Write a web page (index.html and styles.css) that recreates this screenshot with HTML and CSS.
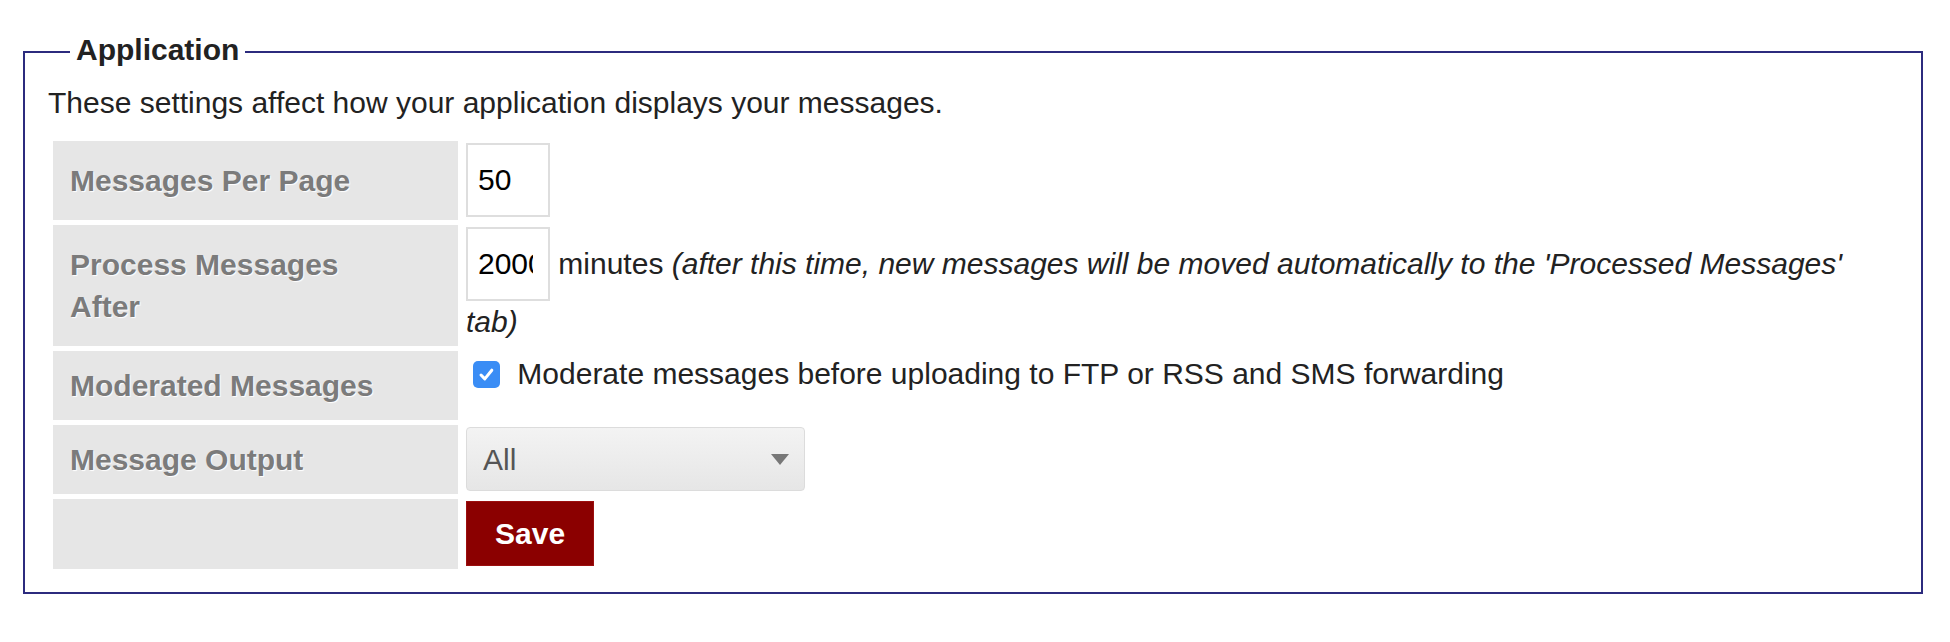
FILE: index.html
```html
<!DOCTYPE html>
<html lang="en">
<head>
<meta charset="utf-8">
<title>Application settings</title>
<link rel="stylesheet" href="styles.css">
</head>
<body>
<fieldset class="app-settings">
  <legend class="app-legend">Application</legend>
  <p class="intro">These settings affect how your application displays your messages.</p>
  <table class="settings">
    <tr>
      <th class="label">Messages Per Page</th>
      <td class="value"><input class="num" type="text" value="50"></td>
    </tr>
    <tr>
      <th class="label">Process Messages After</th>
      <td class="value"><input class="num" type="text" value="2000"> minutes <em>(after this time, new messages will be moved automatically to the 'Processed Messages' tab)</em></td>
    </tr>
    <tr>
      <th class="label">Moderated Messages</th>
      <td class="value"><label class="check"><svg class="box" viewBox="0 0 27 27" width="27" height="27" aria-hidden="true"><rect x="0" y="0" width="27" height="27" rx="5" ry="5" fill="#3a8df5"/><path d="M8 14 L11.8 17.9 L18.8 9.2" fill="none" stroke="#ffffff" stroke-width="3" stroke-linecap="round" stroke-linejoin="round"/></svg> Moderate messages before uploading to FTP or RSS and SMS forwarding</label></td>
    </tr>
    <tr>
      <th class="label">Message Output</th>
      <td class="value"><span class="select-wrap"><select class="select"><option>All</option></select><span class="caret"></span></span></td>
    </tr>
    <tr>
      <th class="label"></th>
      <td class="value"><button class="save" type="button">Save</button></td>
    </tr>
  </table>
</fieldset>
</body>
</html>
```

FILE: styles.css
```css
html, body {
  margin: 0;
  padding: 0;
  background: #ffffff;
}

body {
  font-family: "Liberation Sans", Arial, sans-serif;
  font-size: 30px;
  line-height: 42px;
  color: #222222;
}

.app-settings {
  margin: 29px 27px 0 23px;
  padding: 7px 23px 18px 23px;
  border: 2px solid #2c2b7e;
  min-width: 0;
}

.app-legend {
  margin-left: 22px;
  padding: 0 6px 4px 6px;
  font-weight: bold;
  color: #222222;
  line-height: 42px;
}

.intro {
  margin: 0 0 12px 0;
  color: #222222;
}

.settings {
  width: 100%;
  border-collapse: separate;
  border-spacing: 5px;
}

.label {
  box-sizing: border-box;
  width: 405px;
  padding: 13.5px 60px 13.5px 17px;
  background: #e6e6e6;
  color: #7b7b7b;
  font-weight: bold;
  text-align: left;
  vertical-align: middle;
  text-shadow: 1px 1px 1px #ffffff;
}

.value {
  padding: 2px 3px 3px 3px;
  vertical-align: top;
  color: #222222;
}

.num {
  box-sizing: border-box;
  width: 84px;
  height: 74px;
  padding: 0 15px 0 10px;
  border: 2px solid #dedede;
  background: #ffffff;
  font-family: "Liberation Sans", Arial, sans-serif;
  font-size: 30px;
  color: #000000;
  outline: none;
}

.value em {
  font-style: italic;
}

.check {
  display: inline;
}

.box {
  margin: 0 9px 0 7px;
  vertical-align: -4px;
}

.select-wrap {
  position: relative;
  display: inline-block;
}

.select {
  -webkit-appearance: none;
  appearance: none;
  box-sizing: border-box;
  width: 339px;
  height: 64px;
  padding: 0 16px;
  border: 1px solid #dcdcdc;
  border-radius: 4px;
  background: linear-gradient(#f3f3f3, #e6e6e6);
  font-family: "Liberation Sans", Arial, sans-serif;
  font-size: 30px;
  color: #555555;
  vertical-align: top;
}

.caret {
  position: absolute;
  right: 16px;
  top: 27px;
  width: 0;
  height: 0;
  border-left: 9px solid transparent;
  border-right: 9px solid transparent;
  border-top: 11px solid #777777;
  pointer-events: none;
}

.save {
  box-sizing: border-box;
  height: 65px;
  padding: 0 28px;
  border: 1px solid #9c0f0f;
  background: #8b0000;
  color: #ffffff;
  font-family: "Liberation Sans", Arial, sans-serif;
  font-size: 30px;
  font-weight: bold;
  vertical-align: top;
  cursor: pointer;
}
```
